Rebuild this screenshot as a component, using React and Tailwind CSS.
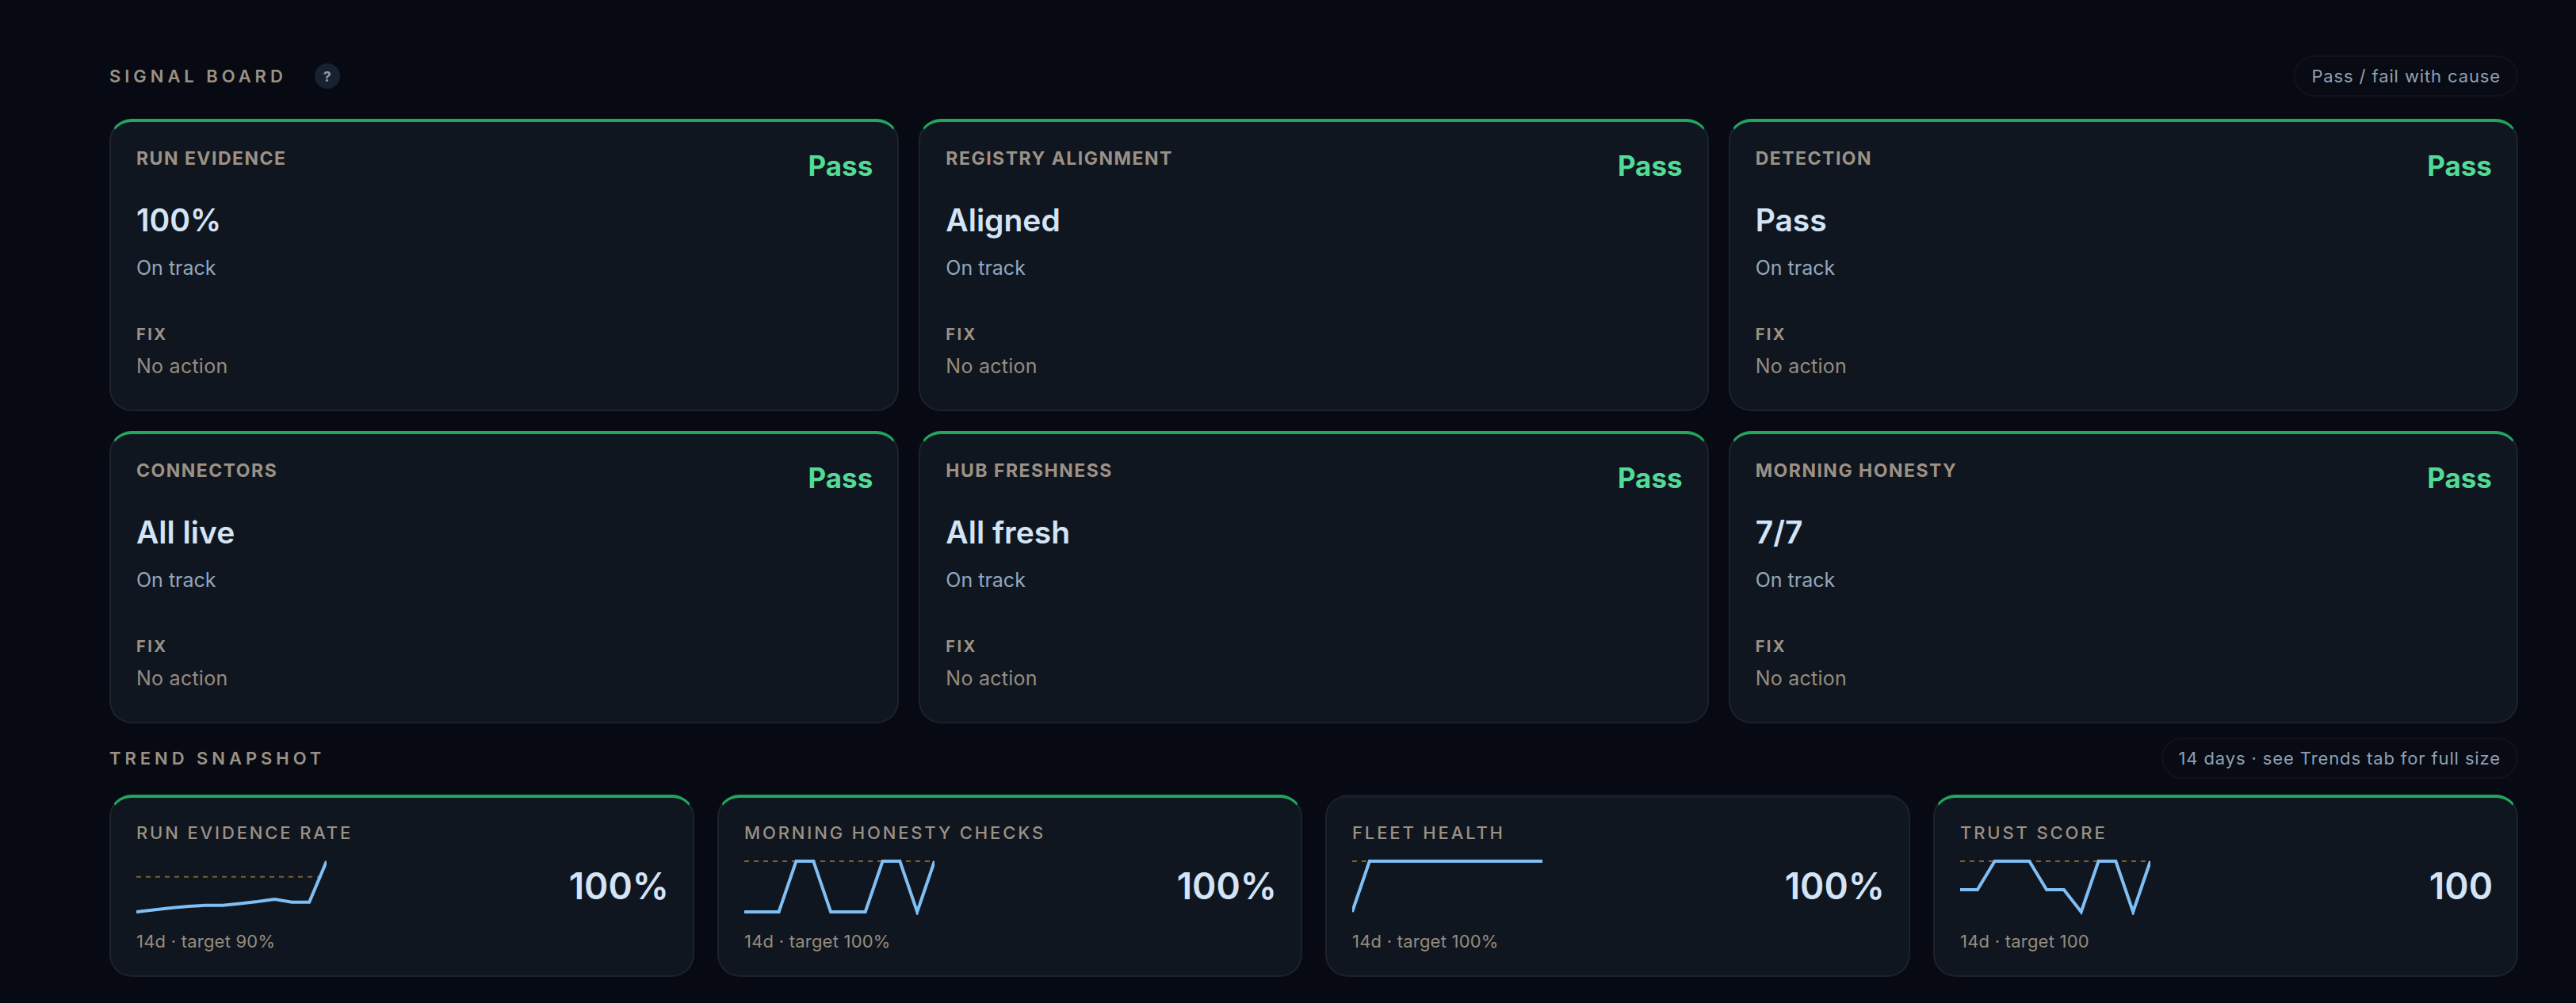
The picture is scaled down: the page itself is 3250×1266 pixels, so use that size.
const signals = [
  { title: "RUN EVIDENCE", value: "100%" },
  { title: "REGISTRY ALIGNMENT", value: "Aligned" },
  { title: "DETECTION", value: "Pass" },
  { title: "CONNECTORS", value: "All live" },
  { title: "HUB FRESHNESS", value: "All fresh" },
  { title: "MORNING HONESTY", value: "7/7" },
];

const trends = [
  {
    title: "RUN EVIDENCE RATE",
    foot: "14d · target 90%",
    value: "100%",
    target: 23.7,
    green: true,
    data: [68, 65.5, 63, 61, 59.7, 59.7, 57.5, 55, 52, 55.7, 55.7, 4],
  },
  {
    title: "MORNING HONESTY CHECKS",
    foot: "14d · target 100%",
    value: "100%",
    target: 4,
    green: true,
    data: [68, 68, 68, 4, 4, 68, 68, 68, 4, 4, 68, 4],
  },
  {
    title: "FLEET HEALTH",
    foot: "14d · target 100%",
    value: "100%",
    target: 4,
    green: false,
    data: [68, 4, 4, 4, 4, 4, 4, 4, 4, 4, 4, 4],
  },
  {
    title: "TRUST SCORE",
    foot: "14d · target 100",
    value: "100",
    target: 4,
    green: true,
    data: [40, 40, 4, 4, 4, 40, 40, 68, 4, 4, 68, 4],
  },
];

const Pill = ({ children }) => (
  <span className="h-[52px] px-[20px] flex items-center rounded-full border-2 border-[#0f131a] bg-[#080b13] text-[22px] tracking-[0.04em] text-[#8fa0b5]">
    {children}
  </span>
);

const SignalCard = ({ title, value }) => (
  <div className="h-[369px] rounded-[28px] border-2 border-t-4 border-[#1c222d] border-t-[#22a55f] bg-[#10161f] pl-[32px] pr-[31px] pt-[30px]">
    <div className="flex items-start justify-between">
      <div>
        <div className="h-[32px] leading-[32px] text-[23px] font-bold tracking-[0.065em] text-[#9c9185]">{title}</div>
        <div className="mt-[39px] h-[46px] leading-[46px] text-[39px] font-semibold text-[#d3e4f7]">{value}</div>
      </div>
      <div className="mt-[3px] leading-[44px] text-[35px] font-bold text-[#52db96]">Pass</div>
    </div>
    <div className="mt-[21px] leading-[32px] text-[25px] text-[#93a7bd]">On track</div>
    <div className="mt-[56px] leading-[24px] text-[20px] font-bold tracking-[0.12em] text-[#9c9185]">FIX</div>
    <div className="mt-[12px] leading-[32px] text-[25px] tracking-[0.01em] text-[#968c7f]">No action</div>
  </div>
);

const Spark = ({ data, target }) => {
  const pts = data.map((y, i) => `${(i * 240) / 11},${y}`).join(" ");
  return (
    <svg width="240" height="72" viewBox="0 0 240 72" className="block">
      <line x1="0" x2="240" y1={target} y2={target} stroke="#7f5f22" strokeWidth="2" strokeDasharray="6 6" />
      <polyline points={pts} fill="none" stroke="#7fbff5" strokeWidth="4" />
    </svg>
  );
};

const TrendCard = ({ title, foot, value, target, data, green }) => (
  <div
    className={`h-[230px] rounded-[28px] border-2 border-t-4 border-[#1c222d] bg-[#10161f] pl-[32px] pr-[30px] pt-[30px] flex items-center justify-between ${
      green ? "border-t-[#22a55f]" : "border-t-[#161d29]"
    }`}
  >
    <div className="self-start">
      <div className="leading-[28px] text-[22px] font-medium tracking-[0.13em] text-[#9c9185]">{title}</div>
      <div className="mt-[18px]">
        <Spark data={data} target={target} />
      </div>
      <div className="mt-[19px] leading-[28px] text-[22px] tracking-[0.01em] text-[#968c7f]">{foot}</div>
    </div>
    <div className="-mt-[32px] text-[46px] font-semibold text-[#d3e4f7]">{value}</div>
  </div>
);

export default function App() {
  return (
    <main className="min-h-screen bg-[#070a12] pl-[138px] pr-[73px] pt-[70px] font-['Inter',sans-serif]">
      <div className="flex items-center justify-between">
        <div className="flex items-center gap-[35px]">
          <h2 className="text-[22px] font-semibold tracking-[0.225em] text-[#9c9185]">SIGNAL BOARD</h2>
          <span className="w-[32px] h-[32px] rounded-full bg-[#172230] flex items-center justify-center text-[18px] font-bold text-[#8f98a3]">?</span>
        </div>
        <Pill>Pass / fail with cause</Pill>
      </div>

      <div className="mt-[28px] grid grid-cols-3 gap-[25px]">
        {signals.map((s) => (
          <SignalCard key={s.title} {...s} />
        ))}
      </div>

      <div className="mt-[18px] flex items-center justify-between">
        <h2 className="text-[22px] font-semibold tracking-[0.225em] text-[#9c9185]">TREND SNAPSHOT</h2>
        <Pill>14 days · see Trends tab for full size</Pill>
      </div>

      <div className="mt-[20px] grid grid-cols-4 gap-[29px]">
        {trends.map((t) => (
          <TrendCard key={t.title} {...t} />
        ))}
      </div>
    </main>
  );
}
